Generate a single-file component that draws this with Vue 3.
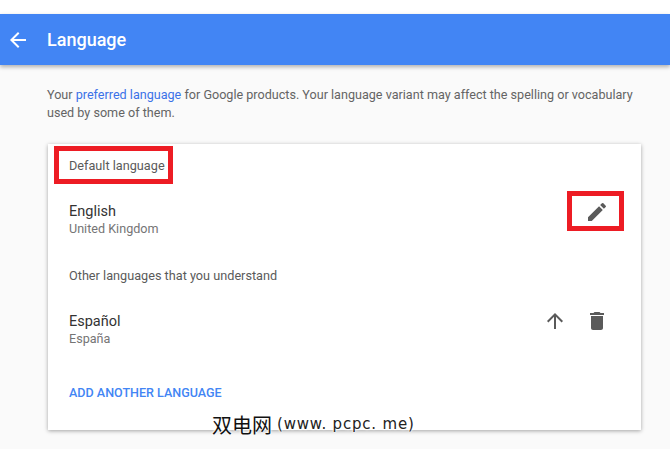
<script setup>
const intro = ' for Google products. Your language variant may affect the spelling or vocabulary used by some of them.'
</script>

<template>
  <div class="page">
    <div class="topgap"></div>
    <header class="bar">
      <svg class="back" width="24" height="24" viewBox="0 0 24 24"><path fill="#fff" d="M20 11H7.83l5.59-5.59L12 4l-8 8 8 8 1.41-1.41L7.83 13H20v-2z"/></svg>
      <h1 class="title">Language</h1>
    </header>
    <main class="content">
      <p class="intro">Your <a class="link">preferred language</a>{{ intro }}</p>
      <section class="card">
        <h2 class="head first">Default language</h2>
        <div class="row one">
          <div class="lang">
            <div class="name">English</div>
            <div class="sub">United Kingdom</div>
          </div>
          <div class="icons">
            <svg width="24" height="24" viewBox="0 0 24 24"><path fill="#5a5a5a" d="M3 17.25V21h3.75L17.81 9.94l-3.75-3.75L3 17.25zM20.71 7.04a1 1 0 0 0 0-1.41l-2.34-2.34a1 1 0 0 0-1.41 0l-1.83 1.83 3.75 3.75 1.83-1.83z"/></svg>
          </div>
        </div>
        <h2 class="head second">Other languages that you understand</h2>
        <div class="row two">
          <div class="lang">
            <div class="name">Español</div>
            <div class="sub">España</div>
          </div>
          <div class="icons pair">
            <svg width="24" height="24" viewBox="0 0 24 24"><path fill="#5a5a5a" d="M4 12l1.41 1.41L11 7.83V20h2V7.83l5.58 5.59L20 12l-8-8-8 8z"/></svg>
            <svg width="24" height="24" viewBox="0 0 24 24"><path fill="#5a5a5a" d="M6 19c0 1.1.9 2 2 2h8c1.1 0 2-.9 2-2V7H6v12zM19 4h-3.5l-1-1h-5l-1 1H5v2h14V4z"/></svg>
          </div>
        </div>
        <div class="add">ADD ANOTHER LANGUAGE</div>
      </section>
    </main>
    <div class="mark box-a"></div>
    <div class="mark box-b"></div>
    <div class="watermark"><span class="wm-cjk">双电网</span><span class="wm-latin">(www. pcpc. me)</span></div>
  </div>
</template>

<style>
html, body { margin: 0; padding: 0; background: #fafafa; overflow: hidden; }
</style>

<style scoped>
.page {
  position: relative;
  width: 670px;
  height: 449px;
  overflow: hidden;
  background: #fafafa;
  font-family: Roboto, "Noto Sans", sans-serif;
  color: #5f6368;
}
.topgap { height: 14px; background: #fff; }
.bar {
  height: 51px;
  background: #4285f4;
  display: flex;
  align-items: center;
  padding-left: 6px;
  box-shadow: 0 2px 4px rgba(0, 0, 0, 0.3);
  position: relative;
}
.back { flex: none; }
.title {
  margin: 0 0 0 17px;
  font-size: 18px;
  font-weight: 500;
  color: #fff;
}
.content { padding: 21px 29px 0 47px; }
.intro {
  margin: 0;
  font-size: 12.6px;
  line-height: 18px;
  color: #646464;
}
.link { color: #3b72e8; }
.card {
  margin: 22px 0 0 1px;
  height: 286px;
  box-sizing: border-box;
  background: #fff;
  padding: 0 21px;
  box-shadow: 0 1px 4px rgba(0, 0, 0, 0.35);
}
.head {
  margin: 0;
  font-size: 12.7px;
  font-weight: 400;
  line-height: 18px;
  color: #5a5a5a;
}
.head.first { padding-top: 13px; }
.head.second { margin-top: 30px; }
.row { display: flex; justify-content: space-between; align-items: flex-start; }
.row.one { margin-top: 26px; }
.row.two { margin-top: 26px; }
.name { font-size: 14.5px; line-height: 20px; padding-top: 1px; margin-bottom: -1px; color: #333; }
.sub { font-size: 12.6px; line-height: 16px; color: #757575; }
.icons { display: flex; gap: 18px; margin-right: 11px; margin-top: -1px; }
.icons.pair { margin-top: -2px; }
.add {
  margin-top: 37px;
  font-size: 12.55px;
  font-weight: 500;
  line-height: 18px;
  color: #4285f4;
}
.mark { position: absolute; box-sizing: border-box; border: 5px solid #ed1c24; }
.box-a { left: 54px; top: 146px; width: 119px; height: 38px; }
.box-b { left: 567px; top: 191px; width: 57px; height: 40px; }
.watermark {
  position: absolute;
  left: 212px;
  top: 411px;
  display: flex;
  align-items: center;
  height: 26px;
  color: #111;
  white-space: nowrap;
  text-shadow: 0 0 2px #fff, 0 0 2px #fff, 0 0 3px #fff;
}
.wm-cjk {
  font-family: "Noto Sans CJK SC", sans-serif;
  font-size: 20px;
}
.wm-latin {
  margin-left: 5px;
  font-family: "DejaVu Sans", sans-serif;
  font-size: 15px;
  letter-spacing: 0.8px;
  color: #222;
}
</style>
